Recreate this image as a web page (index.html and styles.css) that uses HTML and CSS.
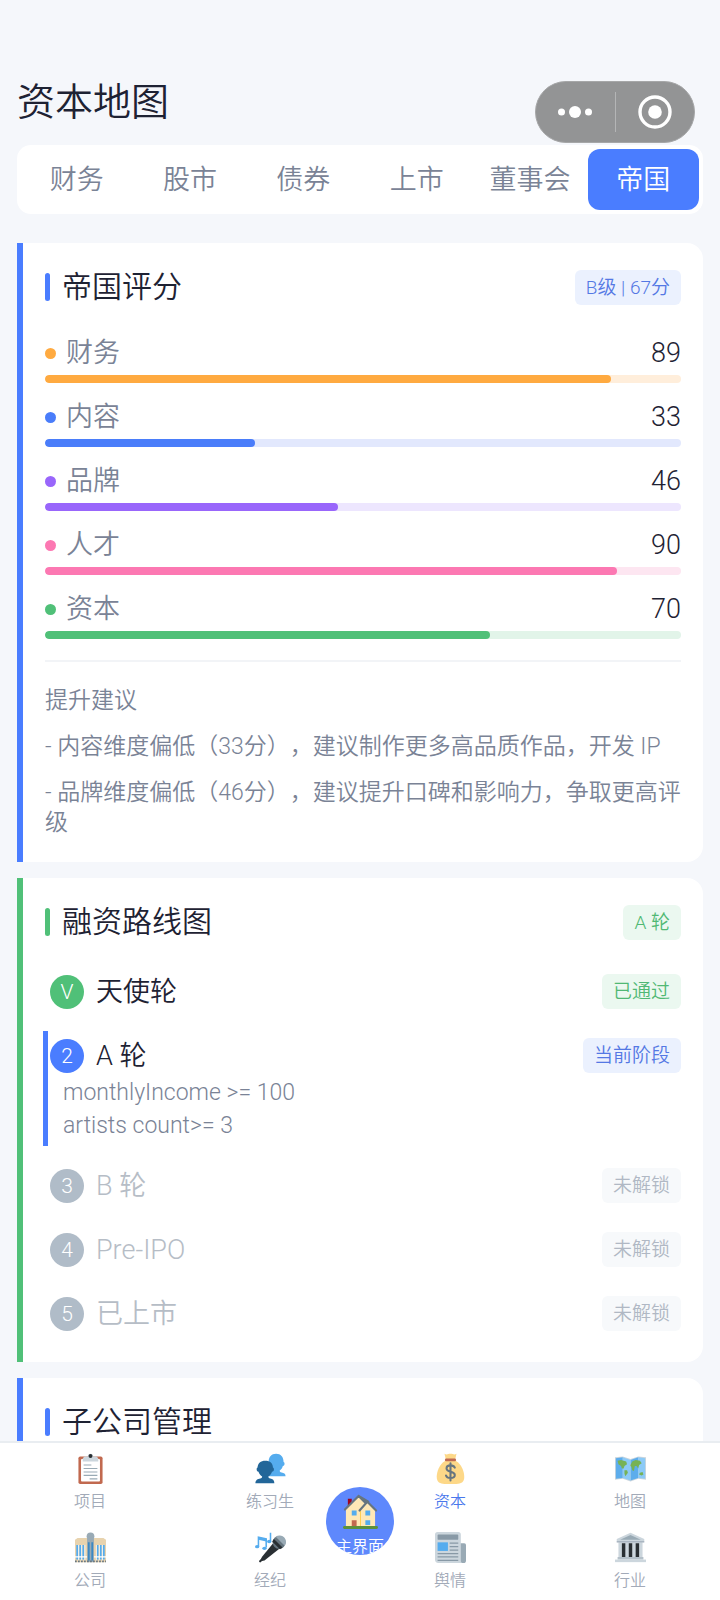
FILE: index.html
```html
<!DOCTYPE html>
<html lang="zh-CN">
<head>
    <meta charset="UTF-8">
    <meta name="viewport" content="width=device-width, initial-scale=1.0">
    <title>资本地图</title>
    <link rel="stylesheet" href="styles.css">
</head>
<body>

    <div class="app">
        <!-- mini program capsule -->
        <div class="capsule">
            <button type="button" class="capsule-btn" aria-label="更多">
                <svg width="36" height="14" viewBox="0 0 36 14" fill="#fff">
                    <circle cx="4.500" cy="7" r="3.500"/>
                    <circle cx="18" cy="7" r="6"/>
                    <circle cx="31.500" cy="7" r="3.500"/>
                </svg>
            </button>
            <span class="capsule-line"></span>
            <button type="button" class="capsule-btn" aria-label="关闭">
                <svg width="34" height="34" viewBox="0 0 34 34">
                    <circle cx="17" cy="17" r="15" fill="none" stroke="#fff" stroke-width="3.400"/>
                    <circle cx="17" cy="17" r="6.800" fill="#fff"/>
                </svg>
            </button>
        </div>

        <main class="page">
            <h1 class="page-title">资本地图</h1>

            <div class="tabs">
                <button type="button" class="tab">财务</button>
                <button type="button" class="tab">股市</button>
                <button type="button" class="tab">债券</button>
                <button type="button" class="tab">上市</button>
                <button type="button" class="tab">董事会</button>
                <button type="button" class="tab active">帝国</button>
            </div>

            <section class="card card-blue">
                <div class="card-header">
                    <h2 class="card-title">帝国评分</h2>
                    <span class="tag tag-blue">B级 | 67分</span>
                </div>

                <div class="scores">
                    <div class="score orange">
                        <div class="score-row">
                            <span class="dot"></span>
                            <span class="score-name">财务</span>
                            <span class="score-value">89</span>
                        </div>
                        <div class="bar"><div class="bar-fill" style="width: 89%"></div></div>
                    </div>
                    <div class="score blue">
                        <div class="score-row">
                            <span class="dot"></span>
                            <span class="score-name">内容</span>
                            <span class="score-value">33</span>
                        </div>
                        <div class="bar"><div class="bar-fill" style="width: 33%"></div></div>
                    </div>
                    <div class="score purple">
                        <div class="score-row">
                            <span class="dot"></span>
                            <span class="score-name">品牌</span>
                            <span class="score-value">46</span>
                        </div>
                        <div class="bar"><div class="bar-fill" style="width: 46%"></div></div>
                    </div>
                    <div class="score pink">
                        <div class="score-row">
                            <span class="dot"></span>
                            <span class="score-name">人才</span>
                            <span class="score-value">90</span>
                        </div>
                        <div class="bar"><div class="bar-fill" style="width: 90%"></div></div>
                    </div>
                    <div class="score green">
                        <div class="score-row">
                            <span class="dot"></span>
                            <span class="score-name">资本</span>
                            <span class="score-value">70</span>
                        </div>
                        <div class="bar"><div class="bar-fill" style="width: 70%"></div></div>
                    </div>
                </div>

                <div class="advice">
                    <p>提升建议</p>
                    <p>- 内容维度偏低（33分），建议制作更多高品质作品，开发 IP</p>
                    <p>- 品牌维度偏低（46分），建议提升口碑和影响力，争取更高评级</p>
                </div>
            </section>

            <section class="card card-green">
                <div class="card-header">
                    <h2 class="card-title">融资路线图</h2>
                    <span class="tag tag-green">A 轮</span>
                </div>

                <div class="stages">
                    <div class="stage done">
                        <div class="stage-row">
                            <span class="stage-num">V</span>
                            <span class="stage-name">天使轮</span>
                            <span class="tag tag-green">已通过</span>
                        </div>
                    </div>
                    <div class="stage current">
                        <div class="stage-row">
                            <span class="stage-num">2</span>
                            <span class="stage-name">A 轮</span>
                            <span class="tag tag-blue">当前阶段</span>
                        </div>
                        <div class="stage-needs">
                            <p>monthlyIncome &gt;= 100</p>
                            <p>artists count&gt;= 3</p>
                        </div>
                    </div>
                    <div class="stage locked">
                        <div class="stage-row">
                            <span class="stage-num">3</span>
                            <span class="stage-name">B 轮</span>
                            <span class="tag tag-gray">未解锁</span>
                        </div>
                    </div>
                    <div class="stage locked">
                        <div class="stage-row">
                            <span class="stage-num">4</span>
                            <span class="stage-name">Pre-IPO</span>
                            <span class="tag tag-gray">未解锁</span>
                        </div>
                    </div>
                    <div class="stage locked">
                        <div class="stage-row">
                            <span class="stage-num">5</span>
                            <span class="stage-name">已上市</span>
                            <span class="tag tag-gray">未解锁</span>
                        </div>
                    </div>
                </div>
            </section>

            <section class="card card-blue">
                <div class="card-header">
                    <h2 class="card-title">子公司管理</h2>
                </div>
            </section>
        </main>

        <nav class="tabbar">
            <a href="#" class="nav-item">
                <svg class="nav-icon" viewBox="0 0 36 36">
                    <rect x="4" y="4" width="28" height="32" rx="2" fill="#c1694f"/>
                    <rect x="7" y="7" width="22" height="26" rx="1" fill="#fff"/>
                    <path d="M22 4h-1a3 3 0 0 0-6 0h-1a4 4 0 0 0-5 5v1h18V9a4 4 0 0 0-5-5z" fill="#ccd6dd"/>
                    <circle cx="18" cy="3.500" r="2.300" fill="#292f33"/>
                    <path d="M10 14h9M10 18h16M10 22h16M10 26h16M17 30h9" stroke="#99aab5" stroke-width="1.300"/>
                </svg>
                <span>项目</span>
            </a>
            <a href="#" class="nav-item">
                <svg class="nav-icon" viewBox="0 0 36 36">
                    <path d="M35.500 27c0-3-2-3.800-4.500-4.300-2-.4-2.300-1-2.300-2.300 2-1.400 3.200-3.300 3.600-5.200 1.500-.2 2-1.400 2-2.700 0-1-.4-1.800-1.100-2C33 4.500 30 1 24.500 1S16 4.500 15.800 10.500V27z" fill="#55acee"/>
                    <path d="M22.500 35c0-3.500-2-4.800-4.800-5.300-1.600-.3-2.200-1-2.200-2.300 2.300-1.500 3.800-3.600 4.200-5.600 1.700-.1 2.300-1.300 2.300-2.900 0-1.100-.5-1.900-1.200-2.100C20.800 12 17.500 9 12 9s-8.800 3-9 7.800c-.7.200-1.100 1-1.100 2.100 0 1.600.7 2.800 2.200 2.900.5 2 1.900 4.100 4.200 5.600 0 1.300-.6 2-2.200 2.300C3.200 30.200.5 31.500.5 35z" fill="#269"/>
                </svg>
                <span>练习生</span>
            </a>
            <a href="#" class="nav-item active">
                <svg class="nav-icon" viewBox="0 0 36 36">
                    <path d="M12 9C5 13 2 22 2 28c0 6 4 8 9 8h14c5 0 9-2 9-8 0-6-3-15-10-19z" fill="#fdd888"/>
                    <path d="M11 1c3 1.500 4 0 7 0s4 1.500 7 0l-1.500 6h-11z" fill="#fdd888"/>
                    <rect x="11.500" y="6.500" width="13" height="3" rx="1.500" fill="#bf6952"/>
                    <path d="M23 17c-1-2-3-2.600-5-2.600-2.800 0-4.600 1.400-4.600 3.600 0 5 9.600 2.500 9.600 7.500 0 2.200-2 3.600-5 3.600-2.500 0-4.600-1-5.200-3M18 12v20" fill="none" stroke="#67757f" stroke-width="2.400" stroke-linecap="round"/>
                </svg>
                <span>资本</span>
            </a>
            <a href="#" class="nav-item">
                <svg class="nav-icon" viewBox="0 0 36 36">
                    <path d="M0 5l9-1 9 3 9-3 9 1v26l-9-1-9 3-9-3-9 1z" fill="#ccd6dd"/>
                    <path d="M1 6l8-1v24l-8 1zM18 8l9-3v24l-9 3z" fill="#5dadec"/>
                    <path d="M9 5l9 3v24l-9-3zM27 5l8 1v24l-8-1z" fill="#8ccaf7"/>
                    <path d="M3 9l4-1 6 2 1 3-3 2-1 3-2 0-1-3-3-2zM11 20l3 0 1 3-3 4-1-3zM18 14l2-4 4-2 5 1 2 3-3 2-1 4-2-3-2 0-1 6-2-1-1-4-1-1zM29 23l3-1 1 3-2 1-3-1z" fill="#77b255"/>
                </svg>
                <span>地图</span>
            </a>
            <a href="#" class="nav-item">
                <svg class="nav-icon" viewBox="0 0 36 36">
                    <circle cx="18" cy="5" r="4.500" fill="#99aab5"/>
                    <path d="M0 9l3-2h30l3 2v26H0z" fill="#e8d3ae"/>
                    <path d="M14 6h8v29h-8z" fill="#99aab5"/>
                    <path d="M2.500 15v17M6 15v17M9.500 15v17M26.500 15v17M30 15v17M33.500 15v17" stroke="#55acee" stroke-width="2"/>
                    <path d="M16 12v21M20 12v21" stroke="#3b88c3" stroke-width="2"/>
                    <path d="M4.200 15v19M7.800 15v19M11.500 15v19M24.800 15v19M28.200 15v19M31.800 15v19" stroke="#f5f8fa"/>
                    <path d="M0 29h14M22 29h14" stroke="#fff" stroke-width="1.500"/>
                    <path d="M0 34h36" stroke="#66757f" stroke-width="2" stroke-dasharray="2 1.500"/>
                </svg>
                <span>公司</span>
            </a>
            <a href="#" class="nav-item">
                <svg class="nav-icon" viewBox="0 0 36 36">
                    <path d="M22 12L8 29l-2 5 5-1 18-14z" fill="#292f33"/>
                    <path d="M9 31l-3 3" stroke="#292f33" stroke-width="2.500" stroke-linecap="round"/>
                    <circle cx="28" cy="12" r="7.500" fill="#66757f"/>
                    <path d="M24 5.500A7.500 7.500 0 0 1 34.500 16z" fill="#99aab5"/>
                    <path d="M22 8l10 10-3 2-9-9z" fill="#292f33"/>
                    <path d="M4 17V6l9 2v10M18 11V1" fill="none" stroke="#55acee" stroke-width="1.800"/>
                    <path d="M4 6l9 2v3L4 9z" fill="#55acee"/>
                    <ellipse cx="2.500" cy="17" rx="2.500" ry="2" fill="#55acee"/>
                    <ellipse cx="11" cy="19" rx="2.500" ry="2" fill="#55acee"/>
                    <ellipse cx="16.500" cy="11" rx="2.500" ry="2" fill="#55acee"/>
                </svg>
                <span>经纪</span>
            </a>
            <a href="#" class="nav-item">
                <svg class="nav-icon" viewBox="0 0 36 36">
                    <path d="M29 13h5a2 2 0 0 1 2 2v18a3 3 0 0 1-3 3h-4z" fill="#99aab5"/>
                    <path d="M3 0h24a3 3 0 0 1 3 3v30a3 3 0 0 0 3 3H4a4 4 0 0 1-4-4V3a3 3 0 0 1 3-3z" fill="#ccd6dd"/>
                    <rect x="3" y="3" width="24" height="6" rx="1" fill="#8899a6"/>
                    <rect x="3" y="12" width="12" height="10" fill="#55acee"/>
                    <path d="M17 13h10M17 17h10M17 21h10M3 25h24M3 29h24M3 33h24" stroke="#8899a6" stroke-width="1.500"/>
                </svg>
                <span>舆情</span>
            </a>
            <a href="#" class="nav-item">
                <svg class="nav-icon" viewBox="0 0 36 36">
                    <path d="M4 12h28v19H4z" fill="#ccd6dd"/>
                    <path d="M18 1L2 8v4h32V8z" fill="#ccd6dd"/>
                    <path d="M18 3.500L6 9h24z" fill="#99aab5"/>
                    <path d="M2 11.500h32" stroke="#8899a6"/>
                    <path d="M8 13h4v16H8zM16 13h4v16h-4zM24 13h4v16h-4z" fill="#292f33"/>
                    <path d="M3 29h30v3H3z" fill="#b4c0c9"/>
                    <path d="M0 32h36v3H0z" fill="#ccd6dd"/>
                </svg>
                <span>行业</span>
            </a>

            <a href="#" class="home-btn">
                <svg class="home-icon" viewBox="0 0 36 36">
                    <path d="M5 5h4v9H5z" fill="#a0041e"/>
                    <path d="M3 16L16 3l7 4 10 10v17H3z" fill="#ffe8b6"/>
                    <path d="M18 16v18" stroke="#ffcc4d"/>
                    <path d="M2 16L16 2l7 7M17 17l8-9 9 9M16 2l10 6" fill="none" stroke="#66757f" stroke-width="2.200" stroke-linecap="round"/>
                    <path d="M9 17h5v5H9zM23 17h5v5h-5zM23 27h5v5h-5z" fill="#55acee"/>
                    <path d="M9 27h5v7H9z" fill="#c1694f"/>
                    <rect x="0" y="33" width="36" height="3" rx="1.500" fill="#5c913b"/>
                </svg>
                <span>主界面</span>
            </a>
        </nav>
    </div>

</body>
</html>
```
FILE: styles.css
```css
* {
    box-sizing: border-box;
}

body {
    margin: 0;
    background-color: #f5f7fb;
    color: #1e2233;
    font-family: Roboto, "Noto Sans CJK SC", sans-serif;
    font-weight: 350;
}

h1, h2, p {
    margin: 0;
    font-weight: inherit;
}

button {
    border: none;
    background: none;
    font-family: inherit;
    font-weight: inherit;
    cursor: pointer;
}

a {
    color: inherit;
    text-decoration: none;
}

.app {
    position: relative;
    display: flex;
    flex-direction: column;
    height: 100vh;
}

.page {
    flex: 1;
    min-height: 0;
    overflow-y: auto;
    scrollbar-width: none;
    padding: 77px 17px 0;
}

.page-title {
    margin-bottom: 18px;
    font-size: 38px;
    line-height: 50px;
}

/* capsule */
.capsule {
    position: absolute;
    top: 81px;
    right: 25px;
    display: flex;
    align-items: center;
    width: 160px;
    height: 62px;
    border: 1px solid #a6a7a8;
    border-radius: 31px;
    background-color: #939495;
}

.capsule-btn {
    display: flex;
    flex: 1;
    align-items: center;
    justify-content: center;
    padding: 0;
}

.capsule-line {
    width: 1px;
    height: 40px;
    background-color: #b4b5b6;
}

/* tabs */
.tabs {
    display: flex;
    gap: 2px;
    margin-bottom: 29px;
    padding: 4px;
    border-radius: 14px;
    background-color: #fff;
}

.tab {
    flex: 1;
    padding: 2px 0 0;
    border-radius: 12px;
    color: #7a8396;
    font-size: 27px;
    line-height: 59px;
}

.tab.active {
    background-color: #4a7dff;
    color: #fff;
}

/* cards */
.card {
    margin-bottom: 16px;
    padding: 23px 22px 24px;
    border-left: 6px solid #4a7dff;
    border-radius: 0 16px 16px 0;
    background-color: #fff;
}

.card-green {
    border-left-color: #50c078;
}

.card-header {
    display: flex;
    align-items: center;
    justify-content: space-between;
    height: 42px;
}

.card-title {
    display: flex;
    align-items: center;
    gap: 12px;
    font-size: 30px;
    line-height: 42px;
}

.card-title::before {
    content: "";
    width: 5px;
    height: 28px;
    border-radius: 3px;
    background-color: #4a7dff;
}

.card-green .card-title::before {
    background-color: #50c078;
}

.tag {
    padding: 0 11px;
    border-radius: 6px;
    font-size: 19px;
    line-height: 35px;
}

.tag-blue {
    background-color: #ebf1fe;
    color: #5478e4;
}

.tag-green {
    background-color: #ebf8f0;
    color: #50b874;
}

.tag-gray {
    background-color: #f7f9fb;
    color: #b0b8c4;
}

/* scores */
.scores {
    display: flex;
    flex-direction: column;
    gap: 14px;
    margin-top: 26px;
}

.score-row {
    display: flex;
    align-items: center;
    margin-bottom: 3px;
    font-size: 27px;
    line-height: 38px;
}

.score {
    padding-bottom: 1px;
}

.dot {
    width: 11px;
    height: 11px;
    margin-right: 10px;
    border-radius: 50%;
}

.score-name {
    flex: 1;
    color: #7a8396;
}

.bar {
    height: 8px;
    border-radius: 4px;
    overflow: hidden;
}

.bar-fill {
    height: 100%;
    border-radius: 4px;
}

.orange .dot, .orange .bar-fill { background-color: #ffaa40; }
.orange .bar { background-color: #ffeedb; }
.blue .dot, .blue .bar-fill { background-color: #4a7dfa; }
.blue .bar { background-color: #e2e8fd; }
.purple .dot, .purple .bar-fill { background-color: #9966fb; }
.purple .bar { background-color: #ede6fe; }
.pink .dot, .pink .bar-fill { background-color: #fc78b2; }
.pink .bar { background-color: #fde6f1; }
.green .dot, .green .bar-fill { background-color: #50c078; }
.green .bar { background-color: #e2f4e9; }

.advice {
    display: flex;
    flex-direction: column;
    gap: 16px;
    margin-top: 20px;
    padding-top: 24px;
    border-top: 2px solid #f2f4f7;
    color: #7a8396;
    font-size: 23px;
    line-height: 30px;
    text-spacing-trim: space-all;
}

/* stages */
.stages {
    display: flex;
    flex-direction: column;
    gap: 15px;
    margin-top: 24px;
    margin-left: -2px;
}

.stage {
    padding: 7px 0 7px 2px;
    border-left: 5px solid transparent;
}

.stage.current {
    padding-bottom: 4px;
    border-left-color: #4a7dff;
}

.stage-row {
    display: flex;
    align-items: center;
}

.stage-num {
    width: 34px;
    margin-right: 12px;
    border-radius: 50%;
    background-color: #b0bcc8;
    color: #fff;
    font-size: 21px;
    line-height: 34px;
    text-align: center;
}

.done .stage-num {
    background-color: #50c078;
}

.current .stage-num {
    background-color: #4a7dff;
}

.stage-name {
    flex: 1;
    padding-top: 2px;
    font-size: 27px;
    line-height: 33px;
}

.locked .stage-name {
    color: #b6bdc6;
}

.stage-needs {
    padding: 3px 0 0 13px;
    color: #7a8396;
    font-size: 23px;
    line-height: 33px;
}

/* bottom navigation */
.tabbar {
    position: relative;
    display: grid;
    grid-template-columns: repeat(4, 1fr);
    row-gap: 16px;
    padding: 10px 0 5px;
    border-top: 2px solid #e9edf1;
    background-color: #fff;
}

.nav-item {
    display: flex;
    flex-direction: column;
    align-items: center;
    gap: 4px;
    color: #a2aab8;
    font-size: 16px;
    line-height: 28px;
}

.nav-item.active {
    color: #4a78ec;
}

.nav-icon {
    width: 31px;
    height: 31px;
}

.home-btn {
    position: absolute;
    top: 44px;
    left: 50%;
    display: flex;
    flex-direction: column;
    align-items: center;
    width: 68px;
    height: 68px;
    margin-left: -34px;
    padding-top: 7px;
    border-radius: 50%;
    background-color: #5e88fc;
    color: #fff;
    font-size: 16px;
    line-height: 36px;
    overflow: hidden;
}

.home-icon {
    flex-shrink: 0;
    width: 35px;
    height: 35px;
}
```
